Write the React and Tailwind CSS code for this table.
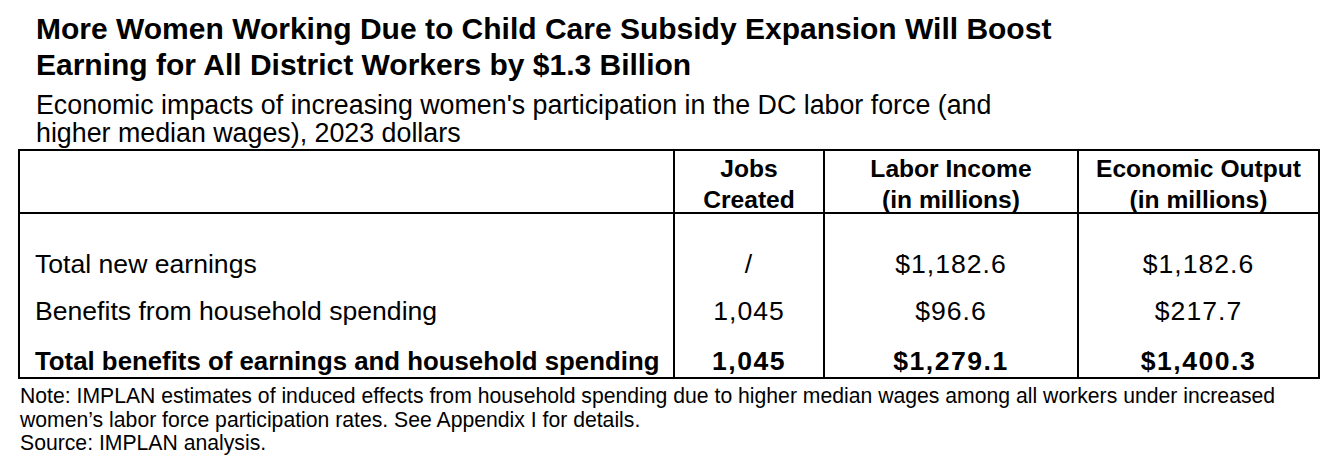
import React from "react";

const rows = [
  { label: "Total new earnings", jobs: "/", labor: "$1,182.6", output: "$1,182.6" },
  { label: "Benefits from household spending", jobs: "1,045", labor: "$96.6", output: "$217.7" },
];

export default function App() {
  return (
    <div className="w-[1334px] h-[466px] bg-white text-black font-['Liberation_Sans',Arial,sans-serif] overflow-hidden">
      <div className="pt-[11px] pl-[36px]">
        <h1 className="text-[30px] leading-[36px] font-bold">
          More Women Working Due to Child Care Subsidy Expansion Will Boost
          <br />
          Earning for All District Workers by $1.3 Billion
        </h1>
        <p className="text-[26.8px] leading-[28px] mt-[8px]">
          Economic impacts of increasing women's participation in the DC labor force (and
          <br />
          higher median wages), 2023 dollars
        </p>
      </div>

      <div className="ml-[18px] mt-[2px] w-[1302px] border-2 border-black">
        {/* header */}
        <div className="grid grid-cols-[653px_150px_254px_241px] h-[63px] border-b-2 border-black text-[24.6px] leading-[31px] font-bold text-center">
          <div />
          <div className="border-l-2 border-black flex flex-col justify-center pt-[2px]">
            <span>Jobs</span>
            <span>Created</span>
          </div>
          <div className="border-l-2 border-black flex flex-col justify-center pt-[2px]">
            <span>Labor Income</span>
            <span>(in millions)</span>
          </div>
          <div className="border-l-2 border-black flex flex-col justify-center pt-[2px]">
            <span>Economic Output</span>
            <span>(in millions)</span>
          </div>
        </div>

        {/* body */}
        <div className="grid grid-cols-[653px_150px_254px_241px] text-[26.6px] leading-[30px]">
          <div className="h-[26px]" />
          <div className="border-l-2 border-black" />
          <div className="border-l-2 border-black" />
          <div className="border-l-2 border-black" />

          {rows.map((r) => (
            <React.Fragment key={r.label}>
              <div className="h-[47px] flex items-center pl-[15px]">{r.label}</div>
              <div className="border-l-2 border-black flex items-center justify-center tracking-[1px]">{r.jobs}</div>
              <div className="border-l-2 border-black flex items-center justify-center tracking-[1px]">{r.labor}</div>
              <div className="border-l-2 border-black flex items-center justify-center tracking-[1px]">{r.output}</div>
            </React.Fragment>
          ))}

          <div className="h-[43px] flex items-center pt-[10px] pl-[15px] font-bold text-[25.8px]">
            Total benefits of earnings and household spending
          </div>
          <div className="border-l-2 border-black flex items-center justify-center pt-[10px] font-bold tracking-[1.5px]">1,045</div>
          <div className="border-l-2 border-black flex items-center justify-center pt-[10px] font-bold tracking-[1.5px]">$1,279.1</div>
          <div className="border-l-2 border-black flex items-center justify-center pt-[10px] font-bold tracking-[1.5px]">$1,400.3</div>
        </div>
      </div>

      <div className="pl-[20px] text-[21.2px] leading-[23.5px] pt-[5px]">
        <p>
          Note: IMPLAN estimates of induced effects from household spending due to higher median wages among all workers under increased
        </p>
        <p>women’s labor force participation rates. See Appendix I for details.</p>
        <p>Source: IMPLAN analysis.</p>
      </div>
    </div>
  );
}
